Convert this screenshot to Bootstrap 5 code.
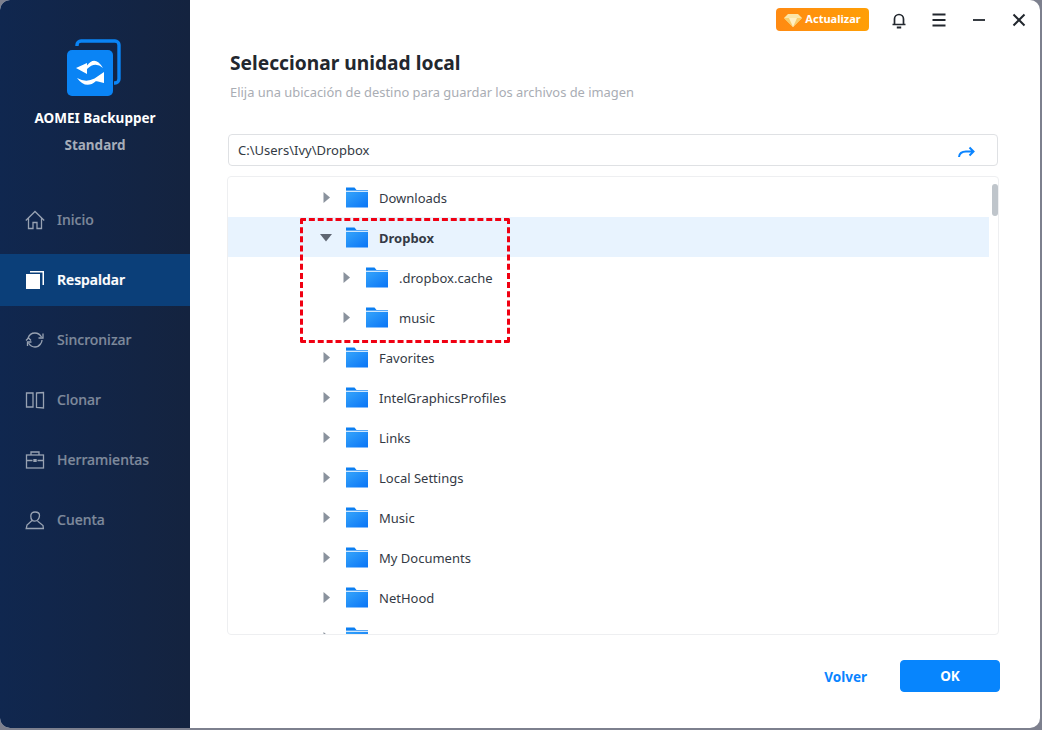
<!DOCTYPE html>
<html lang="es">
<head>
<meta charset="utf-8">
<title>AOMEI Backupper</title>
<link href="https://cdn.jsdelivr.net/npm/bootstrap@5.3.0/dist/css/bootstrap.min.css" rel="stylesheet">
<style>
html,body{height:100%}
body{margin:0;background:#7d808e;font-family:"Noto Sans","Open Sans",sans-serif;overflow:hidden}
.app-win{width:1040px;height:728px;background:#fff;border-radius:10px;overflow:hidden}
.side{width:190px;flex:none;background:linear-gradient(90deg,#10274f,#14233f);color:#fff}
.logo-box{padding-top:39px;height:190px}
.logo-mark{margin-left:66px}
.logo-name{font-size:13.5px;font-weight:700;margin-top:11px;line-height:20px}
.logo-ed{font-size:13.5px;font-weight:700;color:#a6adb9;margin-top:7px;line-height:20px}
.side-item{height:52px;margin:4px 0;padding-left:25px;gap:12px;font-size:14px;color:#7f8a9c;font-weight:500;-webkit-text-stroke:.2px}
.side-item span{padding-bottom:2px}
.side-item.now{background:#0b3f79;color:#fff;font-weight:600}
.side-item svg{flex:none}
.main-pane{min-width:0}
.top-bar{height:40px;padding-top:8px;padding-right:11px}
.up-btn{width:93px;height:23px;background:linear-gradient(90deg,#ff8a12,#ff9f05);border-radius:4px;color:#fff;font-size:11px;font-weight:700;gap:3px;margin-right:20px}
.win-ico{width:20px;height:20px;margin-left:20px;margin-top:2px}
.win-ico:first-of-type{margin-left:0}
.page-head{padding:0 0 0 40px}
.page-title{font-size:19.2px;font-weight:700;color:#22272e;line-height:26px;margin:10px 0 0}
.page-sub{font-size:12.9px;color:#a9adb4;line-height:18px;margin:7px 0 0}
.path-box{margin:33px 0 0 38px;width:770px;height:32px;border:1px solid #dfe1e4;border-radius:4px;padding:0 22px 0 9px;font-size:13px;color:#333a44}
.path-box span{padding-top:2px}
.path-go{margin-top:4px}
.tree-box{margin:10px 0 0 37px;width:772px;height:459px;position:relative;border:1px solid #eeeff1;border-radius:4px;overflow:hidden}
.tree-row{height:40px;font-size:13px;color:#343a45;width:761px;padding-top:4px}
.tree-row.sel{background:#e8f3fe;font-weight:700}
.l0{padding-left:94px}
.l1{padding-left:114px}
.tw{width:9px;height:11px;flex:none;margin-right:14px;position:relative;top:-2px}
.tw-d{margin-left:-2px;width:12px;margin-right:13px}
.fo{width:24px;height:22px;flex:none;margin-right:10px;position:relative;top:-2px}
.sbar{position:absolute;right:0;top:7px;width:6px;height:32px;border-radius:3px;background:#bfc5cb}
.red-box{position:absolute;left:72px;top:41px;width:210px;height:125px;border:3px dashed #f00012;border-radius:2px}
.bottom-bar{margin-top:25px;padding-right:40px}
.back-lnk{font-size:13.5px;font-weight:700;color:#0a84ff;margin-right:33px;text-decoration:none;padding-top:2px}
.ok-btn{width:100px;height:32px;background:#0785fd;border-color:#0785fd;font-size:13.5px;font-weight:700;border-radius:4px;padding:0}
</style>
</head>
<body>
<svg width="0" height="0" class="position-absolute">
<defs>
<linearGradient id="fg" x1="0" y1="0" x2="1" y2="1"><stop offset="0" stop-color="#35a4fb"/><stop offset="1" stop-color="#0a74f6"/></linearGradient>
<symbol id="folder" viewBox="0 0 24 22">
<path d="M1 1.500h8.500l2 2.500H23v3H1z" fill="#0c7ff2"/>
<rect x="1" y="4.600" width="22" height="1.500" fill="#cfe7fd"/>
<rect x="1" y="6.200" width="22" height="15.300" fill="url(#fg)"/>
</symbol>
<symbol id="tri" viewBox="0 0 9 11"><path d="M1.500 0 8 5.500 1.500 11z" fill="#8a929d"/></symbol>
</defs>
</svg>
<div class="app-win d-flex">
<aside class="side d-flex flex-column">
<div class="logo-box text-center">
<svg width="58" height="58" viewBox="0 0 58 58" class="d-block logo-mark">
<path d="M11 7V6a4 4 0 0 1 4-4h34a4 4 0 0 1 4 4v34a4 4 0 0 1-4 4h-1" fill="none" stroke="#0a84f5" stroke-width="3.400"/>
<rect x="1" y="11" width="46" height="46" rx="5" fill="#0a84f5"/>
<path d="M10 29 21 24V26.500Q29 16 37 29 29 22 21 30V35z" fill="#fff"/>
<path d="M38 33V44L28 41.500 30 42Q20 51 11 39 20 44 28.500 39.500z" fill="#fff"/>
</svg>
<div class="logo-name">AOMEI Backupper</div>
<div class="logo-ed">Standard</div>
</div>
<nav class="d-flex flex-column">
<div class="side-item d-flex align-items-center">
<svg width="20" height="20" viewBox="0 0 20 20" fill="none" stroke="#98a2b2" stroke-width="1.300"><path d="M.8 10.500 10 1.500l9.200 9M3.500 8.500V18.500h4.500v-6h4v6h4.500V8.500"/></svg>
<span>Inicio</span></div>
<div class="side-item now d-flex align-items-center">
<svg width="20" height="20" viewBox="0 0 20 20" fill="#fff"><path d="M5 1h14v14h-1.500V2.500H5z"/><rect x="1" y="4" width="14" height="15"/></svg>
<span>Respaldar</span></div>
<div class="side-item d-flex align-items-center">
<svg width="20" height="20" viewBox="0 0 20 20" fill="none" stroke="#98a2b2" stroke-width="1.300"><path d="M3 8.500C4 5 7 3 10 3c3 0 5 1.500 6.500 4"/><path d="M17 10c0 .5-.5 3-1.500 4-1.500 2-3.500 3-5.500 3-3 0-5-1.500-6.500-4"/><path d="M18 3.500v4.500h-4.500M1 10.500 3.500 8 6 10.500M2.500 16v-4h4"/></svg>
<span>Sincronizar</span></div>
<div class="side-item d-flex align-items-center">
<svg width="20" height="20" viewBox="0 0 20 20" fill="none" stroke="#98a2b2" stroke-width="1.300"><path d="M1.500 3h6.500v14l-6.500 0zM11.500 3l7-.5v15.500l-7-.5z"/></svg>
<span>Clonar</span></div>
<div class="side-item d-flex align-items-center">
<svg width="20" height="20" viewBox="0 0 20 20" fill="none" stroke="#98a2b2" stroke-width="1.300"><rect x="1.500" y="5" width="17" height="13"/><path d="M6 5V2h8v3M1.500 10.500h6M12.500 10.500h6"/><rect x="8.300" y="9" width="3.400" height="3" fill="#98a2b2" stroke="none"/></svg>
<span>Herramientas</span></div>
<div class="side-item d-flex align-items-center">
<svg width="20" height="20" viewBox="0 0 20 20" fill="none" stroke="#98a2b2" stroke-width="1.300"><path d="M10 2c3 0 4.500 1.200 4.500 3.200 0 3-2 6-4.800 6S5.800 8.500 5.800 6C5.800 3.500 7.500 2 10 2zM7 10.500 2 15l-.800 3.500h17.200L18 15.500l-5.500-4.500"/></svg>
<span>Cuenta</span></div>
</nav>
</aside>
<main class="main-pane flex-grow-1 d-flex flex-column">
<div class="top-bar d-flex justify-content-end">
<div class="up-btn d-flex align-items-center justify-content-center">
<svg width="18" height="14" viewBox="0 0 18 14"><path d="M4 1h10l4 4-9 9-9-9z" fill="#fbe6a8"/><path d="M0 5h18l-9 9z" fill="#f9cd6a"/><path d="M5 5h8l-4 9z" fill="#fff0c4"/></svg>
<span>Actualizar</span></div>
<svg class="win-ico" viewBox="0 0 20 20" fill="none" stroke="#22272e" stroke-width="1.700"><path d="M3.500 14.500h13M5.500 14.500V9a4.500 4.500 0 0 1 9 0v5.500"/><path d="M7.800 17.500h4.400" stroke-width="2"/></svg>
<svg class="win-ico" viewBox="0 0 20 20" fill="none" stroke="#22272e" stroke-width="1.800"><path d="M3.500 4.500h13M3.500 10h13M3.500 15.500h13"/></svg>
<svg class="win-ico" viewBox="0 0 20 20" fill="none" stroke="#22272e" stroke-width="1.800"><path d="M4 10h12"/></svg>
<svg class="win-ico" viewBox="0 0 20 20" fill="none" stroke="#22272e" stroke-width="2"><path d="M4.500 4.500 15.500 15.500M15.500 4.500 4.500 15.500"/></svg>
</div>
<div class="page-head">
<h1 class="page-title">Seleccionar unidad local</h1>
<p class="page-sub">Elija una ubicación de destino para guardar los archivos de imagen</p>
</div>
<div class="path-box d-flex align-items-center justify-content-between">
<span>C:\Users\Ivy\Dropbox</span>
<svg class="path-go" width="17" height="12" viewBox="0 0 17 12" fill="none" stroke="#0a84ff" stroke-width="2"><path d="M1 11C1.500 7 4 5.500 8 5.500h7.500M11.500 1.500l4 4-4 4"/></svg>
</div>
<div class="tree-box">
<div class="tree-row l0 d-flex align-items-center"><svg class="tw"><use href="#tri"/></svg><svg class="fo"><use href="#folder"/></svg><span>Downloads</span></div>
<div class="tree-row l0 sel d-flex align-items-center"><svg class="tw tw-d" viewBox="0 0 12 9"><path d="M0 1h12L6 8.500z" fill="#5f6672"/></svg><svg class="fo"><use href="#folder"/></svg><span>Dropbox</span></div>
<div class="tree-row l1 d-flex align-items-center"><svg class="tw"><use href="#tri"/></svg><svg class="fo"><use href="#folder"/></svg><span>.dropbox.cache</span></div>
<div class="tree-row l1 d-flex align-items-center"><svg class="tw"><use href="#tri"/></svg><svg class="fo"><use href="#folder"/></svg><span>music</span></div>
<div class="tree-row l0 d-flex align-items-center"><svg class="tw"><use href="#tri"/></svg><svg class="fo"><use href="#folder"/></svg><span>Favorites</span></div>
<div class="tree-row l0 d-flex align-items-center"><svg class="tw"><use href="#tri"/></svg><svg class="fo"><use href="#folder"/></svg><span>IntelGraphicsProfiles</span></div>
<div class="tree-row l0 d-flex align-items-center"><svg class="tw"><use href="#tri"/></svg><svg class="fo"><use href="#folder"/></svg><span>Links</span></div>
<div class="tree-row l0 d-flex align-items-center"><svg class="tw"><use href="#tri"/></svg><svg class="fo"><use href="#folder"/></svg><span>Local Settings</span></div>
<div class="tree-row l0 d-flex align-items-center"><svg class="tw"><use href="#tri"/></svg><svg class="fo"><use href="#folder"/></svg><span>Music</span></div>
<div class="tree-row l0 d-flex align-items-center"><svg class="tw"><use href="#tri"/></svg><svg class="fo"><use href="#folder"/></svg><span>My Documents</span></div>
<div class="tree-row l0 d-flex align-items-center"><svg class="tw"><use href="#tri"/></svg><svg class="fo"><use href="#folder"/></svg><span>NetHood</span></div>
<div class="tree-row l0 d-flex align-items-center"><svg class="tw"><use href="#tri"/></svg><svg class="fo"><use href="#folder"/></svg></div>
<div class="sbar"></div>
<div class="red-box"></div>
</div>
<div class="bottom-bar d-flex justify-content-end align-items-center">
<a class="back-lnk" href="#">Volver</a>
<button type="button" class="btn btn-primary ok-btn">OK</button>
</div>
</main>
</div>
</body>
</html>
